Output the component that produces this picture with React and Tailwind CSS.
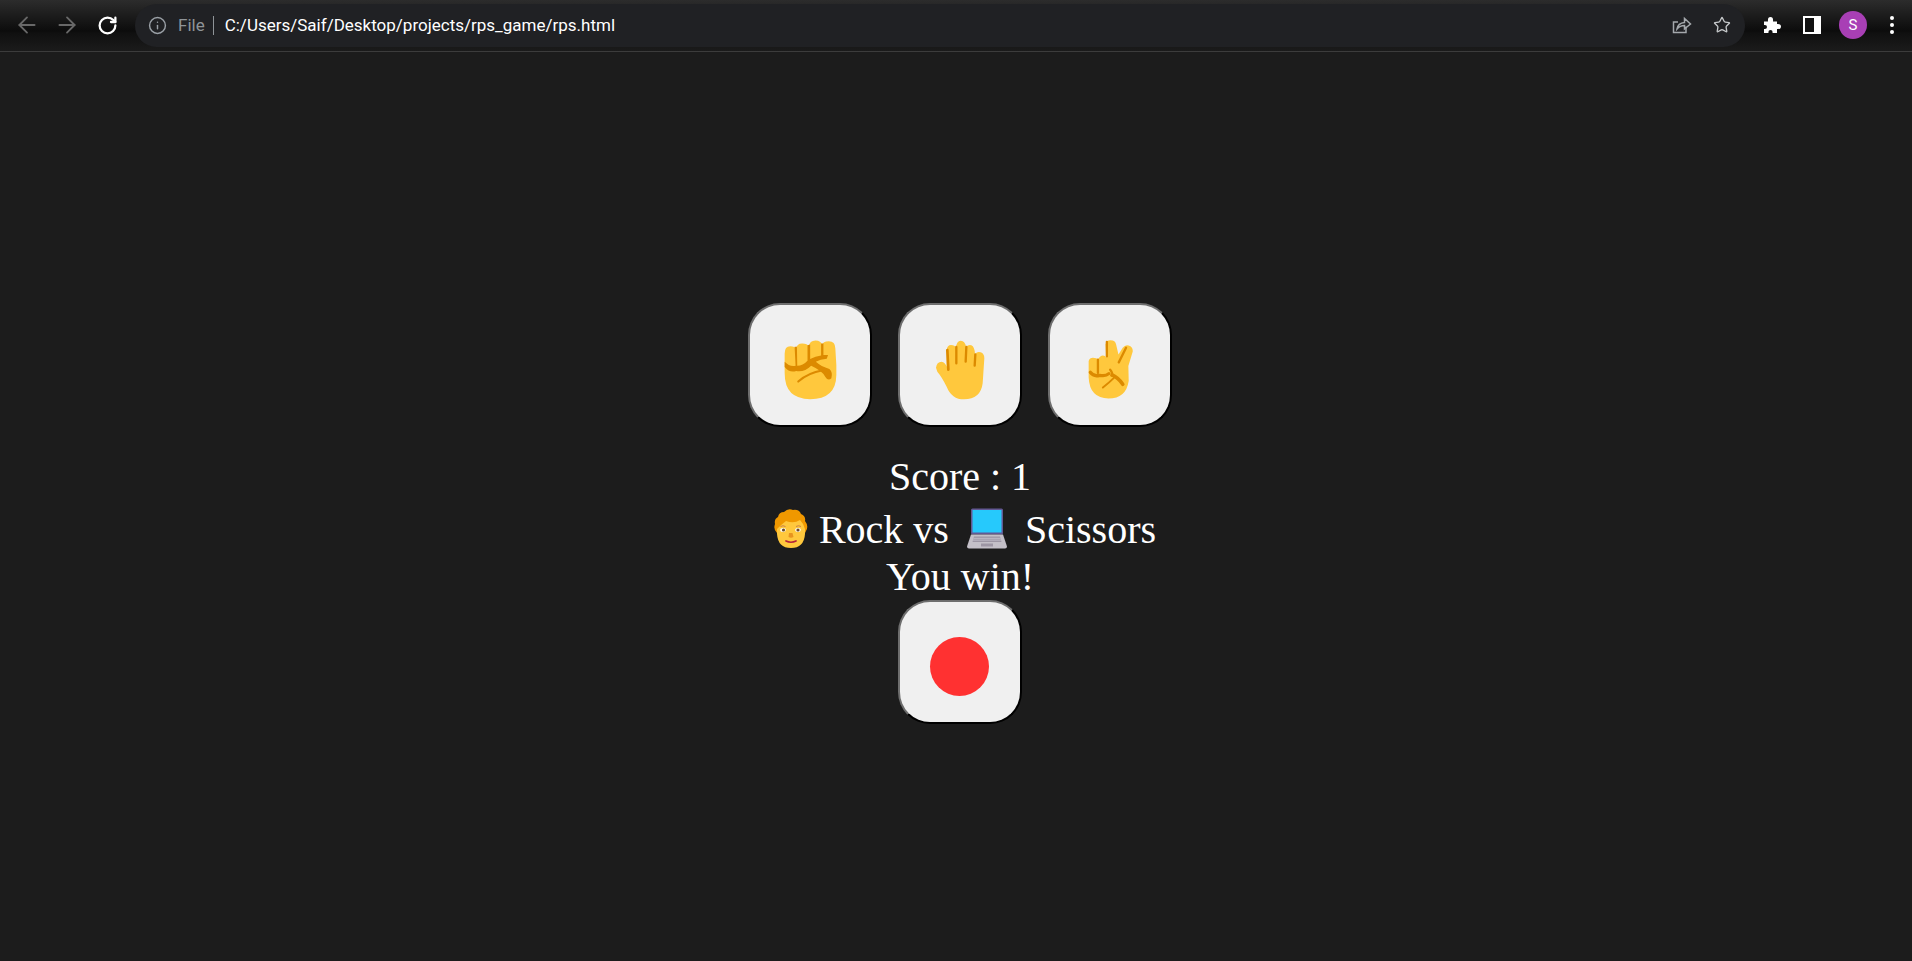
import React from 'react';
import { ArrowLeft, ArrowRight, RotateCw, Info, Star } from 'lucide-react';

const SKIN = '#ffc83d';
const SHADE = '#dc8a00';

const Fist = () => (
  <svg width="53" height="60" viewBox="133 135 160 180">
    <path fill={SKIN} d="M135 175Q135 153 152 153Q167 153 169 163Q171 145 188 145Q204 145 208 155Q210 136 228 136Q245 136 248 150Q250 138 268 138Q288 138 288 160L291 210L291 240Q290 313 212 313Q135 313 135 235Z" />
    <path fill={SHADE} d="M135 200Q150 216 168 212L165 155L172 155L173 212Q190 212 204 197L204 150L212 148L212 192Q228 183 245 181L245 145L252 145L252 180Q260 179 266 180L262 191Q242 192 229 200Q245 214 270 222Q281 232 276 250Q266 259 258 246Q250 228 215 212Q195 232 170 228Q150 235 135 216Z" />
    <path fill="none" stroke={SHADE} strokeWidth="6" strokeLinecap="round" d="M176 260Q205 234 250 226" />
  </svg>
);

const Palm = () => (
  <svg width="50" height="60" viewBox="585 135 150 180">
    <path fill={SKIN} d="M588 218Q590 200 605 200Q615 202 620 215L620 165Q622 150 633 150Q645 150 648 158Q650 137 662 137Q676 137 678 157Q684 148 694 151Q704 155 705 178Q712 168 722 172Q733 176 733 190L728 265Q722 313 672 313Q635 313 620 275Q605 245 592 230Z" />
    <g fill="none" stroke={SHADE} strokeLinecap="round">
      <path strokeWidth="7" d="M649 156L649 205M679 156L677 200M706 178L704 212" />
      <path strokeWidth="8" d="M622 165L625 224" />
    </g>
  </svg>
);

const Victory = () => (
  <svg width="45" height="59" viewBox="1045 137 136 177">
    <path fill={SKIN} d="M1047 200Q1050 190 1060 190Q1072 190 1075 195Q1082 183 1090 183Q1098 183 1100 190L1098 150Q1100 137 1113 137Q1128 137 1130 150L1137 180L1150 160Q1157 150 1168 153Q1182 158 1180 172L1167 215L1168 260Q1160 313 1107 313Q1050 313 1047 250Z" />
    <g fill="none" stroke={SHADE} strokeLinecap="round" strokeLinejoin="round">
      <path strokeWidth="7" d="M1102 142L1102 186M1160 160L1138 204M1075 196L1075 236" />
      <path strokeWidth="10" d="M1052 234Q1062 248 1080 243Q1098 247 1108 238" />
      <path strokeWidth="7" d="M1112 226Q1122 238 1116 244" />
      <path strokeWidth="11" d="M1118 242Q1136 250 1150 270" />
      <path strokeWidth="6" d="M1090 280Q1108 266 1124 250" />
    </g>
  </svg>
);

const Face = () => (
  <svg width="34" height="40" viewBox="0 0 34 40" className="inline-block align-baseline">
    <path fill="#f09800" d="M3 24Q-1 20 1 15Q0 10 4 8Q5 3 10 3Q14 -1 19 1Q25 0 27 5Q32 7 31 12Q35 17 32 22L31 24Z" />
    <path fill={SKIN} d="M3 20Q8 15 12 12Q20 15 26 11Q30 15 31 20L31 25Q30 39 17 39Q4 39 3 25Z" />
    <path fill="none" stroke="#c97f4a" strokeWidth="1" d="M6.500 17.500Q9 16 11.500 17.500M22 17.500Q24.500 16 27 17.500" />
    <ellipse cx="9" cy="21" rx="2.800" ry="1.900" fill="#fff" />
    <ellipse cx="24" cy="21" rx="2.800" ry="1.900" fill="#fff" />
    <circle cx="9.500" cy="21" r="1.600" fill="#6b4a2b" />
    <circle cx="24" cy="21" r="1.600" fill="#6b4a2b" />
    <path fill="#e8941f" d="M15 24L18.500 24L19.500 28Q17 29.500 14.500 28Z" />
    <path fill="none" stroke="#b4233a" strokeWidth="1.700" strokeLinecap="round" d="M12 32Q17 34.500 22 32" />
  </svg>
);

const Laptop = () => (
  <svg width="40" height="41" viewBox="0 0 40 41" className="inline-block align-baseline">
    <rect x="4" y="0.500" width="32" height="26" rx="1.500" fill="#635994" />
    <rect x="5.500" y="2" width="29" height="22.500" fill="#26c9fc" />
    <path fill="#c4c0c8" d="M4 26.500L36 26.500L40 38.500Q40 40.500 38 40.500L2 40.500Q0 40.500 0 38.500Z" />
    <path fill="#9d96a4" d="M7 28.500L33 28.500L34.500 34L5.500 34Z" />
    <path stroke="#d3ced8" strokeWidth="0.700" d="M6.500 30.300L33.500 30.300M6 32.100L34 32.100" />
    <rect x="14" y="35.500" width="12" height="3" fill="#9d96a4" />
  </svg>
);

const GameButton = ({ children }) => (
  <button className="flex h-[124px] w-[124px] shrink-0 items-center justify-center rounded-[32px] border-2 border-t-[#6e6e6e] border-l-[#6e6e6e] border-r-black border-b-black bg-[#f0f0f0]">
    {children}
  </button>
);

export default function App() {
  return (
    <div className="flex min-h-screen flex-col bg-[#1c1c1c] font-['Liberation_Serif',serif] text-white">
      <header className="flex h-[52px] shrink-0 items-center border-b border-[#3c3c3c] bg-[linear-gradient(180deg,#2c2c2c_0px,#0c0c0c_31px,#101010_33px,#1b1b1b_51px)] pb-[1px] font-['Roboto',sans-serif]">
        <div className="flex w-[135px] shrink-0 items-center pl-[7px]">
          <div className="flex w-[40px] justify-center"><ArrowLeft size={26} strokeWidth={1.7} className="text-[#686868]" /></div>
          <div className="flex w-[40px] justify-center"><ArrowRight size={26} strokeWidth={1.7} className="text-[#686868]" /></div>
          <div className="flex w-[40px] justify-center"><RotateCw size={21} strokeWidth={2.6} className="text-white" /></div>
        </div>
        <div className="flex h-[43px] flex-1 items-center rounded-full bg-[#202124] pl-[13px] pr-[14px]">
          <Info size={19} strokeWidth={1.8} className="text-[#9aa0a6]" />
          <span className="ml-[11px] pt-[1px] text-[17px] text-[#8f9498]">File</span>
          <span className="ml-[8px] h-[19px] w-px bg-[#8f9498]" />
          <span className="ml-[11px] pt-[1px] text-[17px] text-white">C:/Users/Saif/Desktop/projects/rps_game/rps.html</span>
          <div className="ml-auto flex items-center gap-[21px]">
            <svg width="20" height="20" viewBox="0 0 20 20" fill="none" stroke="#a4a8ac" strokeWidth="1.5">
              <path d="M14 11.500L14 17.500L1.500 17.500L1.500 7L6 7" />
              <path d="M5 14Q6 8 12.500 7.500L12.500 3.500L18.500 9L12.500 14L12.500 10.500Q8 10.500 5 14Z" />
            </svg>
            <Star size={18} strokeWidth={1.8} className="text-[#c4c7c9]" />
          </div>
        </div>
        <div className="flex w-[167px] shrink-0 items-center pl-[18px]">
          <svg width="18" height="18" viewBox="0 0 18 18" fill="#fff">
            <path d="M1 5.500L5 5.500Q4.500 1 7.500 1Q10.500 1 10 5.500L14 5.500L14 8Q18 7.500 18 10.500Q18 13.500 14 13L14 17L9.500 17Q10 14 7.500 14Q5 14 5.500 17L1 17L1 13Q4 13.500 4 11Q4 8.500 1 9Z" />
          </svg>
          <div className="ml-[22px] h-[18px] w-[18px] bg-white pl-[2px] pt-[2px]">
            <div className="h-[14px] w-[9px] bg-[#111]" />
          </div>
          <div className="ml-[18px] flex h-[28px] w-[28px] items-center justify-center rounded-full bg-[#a83fb5] text-[15px] text-white">S</div>
          <div className="ml-[23px] flex flex-col gap-[3px]">
            <span className="h-[4px] w-[4px] rounded-full bg-white" />
            <span className="h-[4px] w-[4px] rounded-full bg-white" />
            <span className="h-[4px] w-[4px] rounded-full bg-white" />
          </div>
        </div>
      </header>

      <main className="flex flex-col items-center pl-[8px] pt-[251px]">
        <div className="flex gap-[26px]">
          <GameButton><span className="mt-[9px] flex"><Fist /></span></GameButton>
          <GameButton><span className="mt-[9px] flex"><Palm /></span></GameButton>
          <GameButton><span className="mt-[9px] flex"><Victory /></span></GameButton>
        </div>
        <div className="mt-[27px] h-[46px] whitespace-pre text-[40px] leading-[46px]">Score : 1</div>
        <div className="flex h-[54px] items-start whitespace-pre pl-[10px] text-[40px] leading-[46px]">
          <span className="mt-[9px] flex"><Face /></span>
          <span className="ml-[11px] mt-[7px]">Rock vs</span>
          <span className="ml-[18px] mt-[8px] flex"><Laptop /></span>
          <span className="ml-[18px] mt-[7px]">Scissors</span>
        </div>
        <div className="h-[46px] whitespace-pre text-[40px] leading-[46px]">You win!</div>
        <GameButton><span className="mr-[2px] mt-[8px] h-[59px] w-[59px] rounded-full bg-[#ff3131]" /></GameButton>
      </main>
    </div>
  );
}
